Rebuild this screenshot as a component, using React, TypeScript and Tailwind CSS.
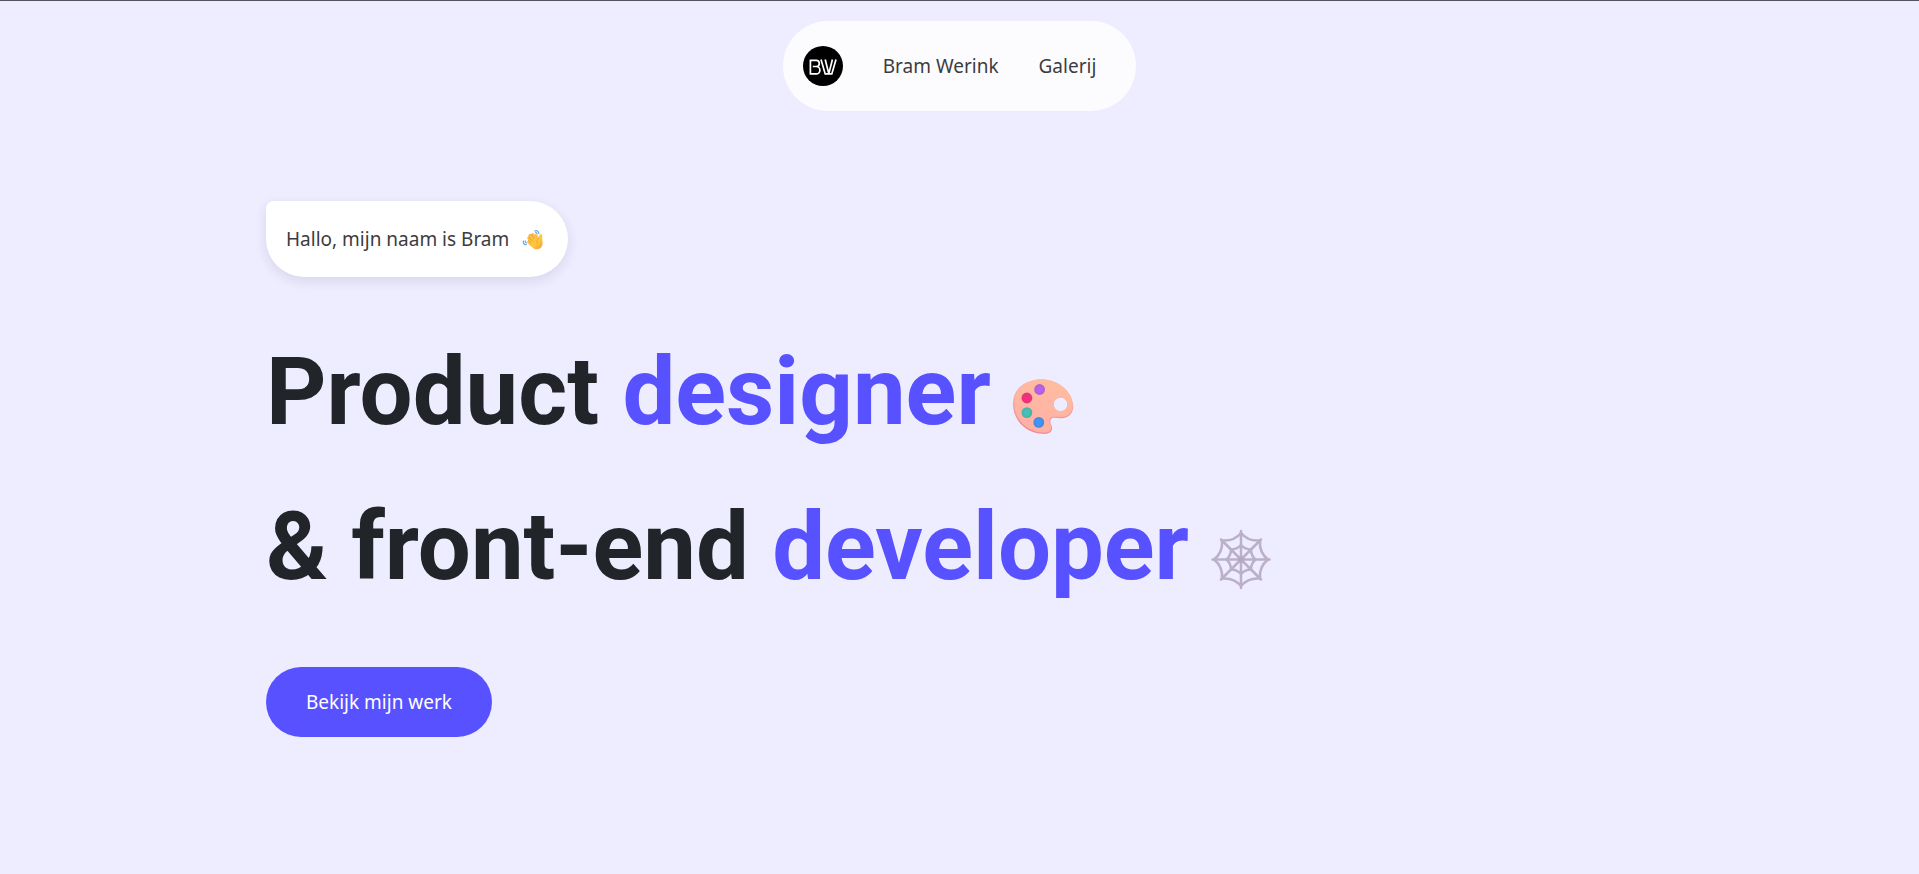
function Logo() {
  return (
    <svg viewBox="0 0 40 40" className="size-10" role="img" aria-label="BW">
      <circle cx="20" cy="20" r="20" fill="#000" />
      <g fill="none" stroke="#fff" strokeWidth="1.7" strokeLinejoin="miter">
        <path d="M7.400 14.300H13.200A3.100 3.100 0 0 1 13.200 20.500H9.800M13.200 20.500A3.700 3.700 0 0 1 13.200 27.900H7.400V13.500" />
        <path d="M18 13.500L22.200 27.900H28.800L33 13.500" />
        <path d="M22.200 13.500L25.800 27.600L29.400 13.500" />
      </g>
    </svg>
  );
}

function WavingHand() {
  return (
    <svg viewBox="0 0 24 24" className="size-[23px]" aria-hidden="true">
      <defs>
        <linearGradient id="hand" x1="0" y1="0" x2="1" y2="1">
          <stop offset="0" stopColor="#f5b83d" />
          <stop offset="0.6" stopColor="#ffc83d" />
          <stop offset="1" stopColor="#f59a3c" />
        </linearGradient>
      </defs>
      <g fill="none" stroke="#5fa8e0" strokeWidth="1.2" strokeLinecap="round">
        <path d="M14.500 3.200C16 2 18.400 3.200 18.600 5.600" />
        <path d="M15.200 5C16 4.600 16.800 5.200 16.800 6.200" />
        <path d="M2.600 13.600C1.800 15.600 3.200 17.600 5.400 17.400" />
        <path d="M4.400 13.400C4.200 14.800 4.800 15.600 6 15.600" />
      </g>
      <path
        d="M8.400 6.600C9.200 5.800 10.200 6 10.900 6.800C10.800 5.400 12.400 4.600 13.400 5.800L14.200 7.100C14.400 6 16 5.800 16.600 6.800L18.600 10C18.900 8.400 19 6.600 20.400 6.400C22.200 6.200 22.400 8.400 22.200 10.400C22 13 23 15 22.200 18C21.200 21.800 16.800 23.400 13.400 21.400C11 20 8.200 17.400 6.800 15.200C6.200 14 6.800 13 7.800 13L6.800 11.400C6 10.200 6.800 9 8 9.100C7.600 8.200 7.800 7.200 8.400 6.600Z"
        fill="url(#hand)"
      />
      <g fill="none" stroke="#e0902f" strokeWidth="0.6" strokeLinecap="round">
        <path d="M10.900 6.800L13.600 11" />
        <path d="M8 9.100L11.600 13.400" />
        <path d="M7.800 13L10.200 15.400" />
        <path d="M18.600 10.400C16.800 12.200 16.200 14 16.800 16" />
      </g>
    </svg>
  );
}

function Palette() {
  return (
    <svg viewBox="0 0 64 64" className="size-16 shrink-0" aria-hidden="true">
      <defs>
        <linearGradient id="board" x1="0.7" y1="0" x2="0.3" y2="1">
          <stop offset="0" stopColor="#ffbd9f" />
          <stop offset="1" stopColor="#ffafa6" />
        </linearGradient>
        <linearGradient id="rim" x1="0.5" y1="0" x2="0.5" y2="1">
          <stop offset="0" stopColor="#fbb193" />
          <stop offset="1" stopColor="#f08a98" />
        </linearGradient>
        <radialGradient id="pink"><stop offset="0.4" stopColor="#f52e83" /><stop offset="1" stopColor="#dd3a72" /></radialGradient>
        <radialGradient id="purple"><stop offset="0.4" stopColor="#bb5ff2" /><stop offset="1" stopColor="#a95fd0" /></radialGradient>
        <radialGradient id="teal"><stop offset="0.4" stopColor="#45c2b8" /><stop offset="1" stopColor="#52aaa4" /></radialGradient>
        <radialGradient id="blue"><stop offset="0.4" stopColor="#3d97fb" /><stop offset="1" stopColor="#4a84d4" /></radialGradient>
      </defs>
      <path
        fillRule="evenodd"
        d="M27 6.500C43 5 59.500 15 62 31C63.400 40.500 57 45.500 50 45.200C44 45 39.500 43.500 39.300 48.500C39.200 51.500 41.600 52.500 41 56C40.300 60.300 36 61.200 31 60.800C14 59.500 2 47 2 31C2 17 12 8 27 6.500ZM49.500 24.500A6.900 6.900 0 1 0 49.500 38.300A6.900 6.900 0 1 0 49.500 24.500Z"
        fill="url(#rim)"
      />
      <path
        fillRule="evenodd"
        d="M28 6.500C43 5.500 59.500 15 61.600 29.800C62.800 39.300 56.500 44.300 50 44C43 43.800 38.600 42.500 38.300 47.700C38.200 50.700 40.600 51.700 40.100 55C39.500 59 35.500 60 31.500 59.600C15.500 58.400 3.200 45.800 3.200 30C3.200 17 14 7.500 28 6.500ZM49.500 24.500A6.900 6.900 0 1 0 49.500 38.300A6.900 6.900 0 1 0 49.500 24.500Z"
        fill="url(#board)"
      />
      <circle cx="28.600" cy="16.500" r="5.400" fill="url(#purple)" />
      <circle cx="15.900" cy="25" r="5.400" fill="url(#pink)" />
      <circle cx="15.900" cy="39.600" r="5.400" fill="url(#teal)" />
      <circle cx="27.800" cy="49.400" r="5.400" fill="url(#blue)" />
    </svg>
  );
}

function SpiderWeb() {
  return (
    <svg viewBox="0 0 64 64" className="size-16 shrink-0" aria-hidden="true">
      <g fill="none" stroke="#bbb0c8" strokeWidth="2.500" strokeLinecap="round" strokeLinejoin="round">
        <path d="M32 3V60M3.500 31.500H60.500M12 11.500L52 51.500M52 11.500L12 51.500" />
        <path d="M32 5Q25 13.500 13 12.500Q14 24.500 5 31.500Q14 38.500 13 50.500Q25 49.500 32 58Q39 49.500 51 50.500Q50 38.500 59 31.500Q50 24.500 51 12.500Q39 13.500 32 5Z" />
        <path d="M32 17Q28 21.500 22 21.500Q22 27.500 17.500 31.500Q22 35.500 22 41.500Q28 41.500 32 46Q36 41.500 42 41.500Q42 35.500 46.500 31.500Q42 27.500 42 21.500Q36 21.500 32 17Z" />
      </g>
      <circle cx="32" cy="31.500" r="3" fill="#b5a9c2" />
    </svg>
  );
}

export default function App() {
  return (
    <div className="min-h-screen border-t border-[#55525f] bg-[#eeedff] font-['Noto_Sans',sans-serif] text-[19px]/7 text-[#3c3c40]">
      <header className="flex justify-center pt-5">
        <nav aria-label="Hoofdmenu" className="flex h-[90px] items-center gap-10 rounded-full bg-[#fcfcff] pr-10 pl-5">
          <a href="#home">
            <Logo />
          </a>
          <a href="#bram">Bram Werink</a>
          <a href="#galerij">Galerij</a>
        </nav>
      </header>

      <main className="mx-auto mt-[90px] flex max-w-[1387px] flex-col items-start">
        <p className="flex h-[76px] items-center gap-3 rounded-[38px] rounded-tl-lg bg-white pr-6 pl-5 shadow-[0_4px_12px_rgba(40,40,80,0.12)]">
          Hallo, mijn naam is Bram
          <WavingHand />
        </p>

        <h1 className="mt-[38px] font-[Roboto,sans-serif] text-[94px]/[155px] font-bold text-[#212529]">
          <span className="flex items-center gap-5">
            <span>
              Product <span className="text-[#5851ff]">designer</span>
            </span>
            <span className="pt-6">
              <Palette />
            </span>
          </span>
          <span className="flex items-center gap-5">
            <span>
              &amp; front-end <span className="text-[#5851ff]">developer</span>
            </span>
            <span className="pt-6">
              <SpiderWeb />
            </span>
          </span>
        </h1>

        <a href="#werk" className="mt-[42px] flex h-[70px] items-center rounded-full bg-[#5851ff] px-10 text-white">
          Bekijk mijn werk
        </a>
      </main>
    </div>
  );
}
